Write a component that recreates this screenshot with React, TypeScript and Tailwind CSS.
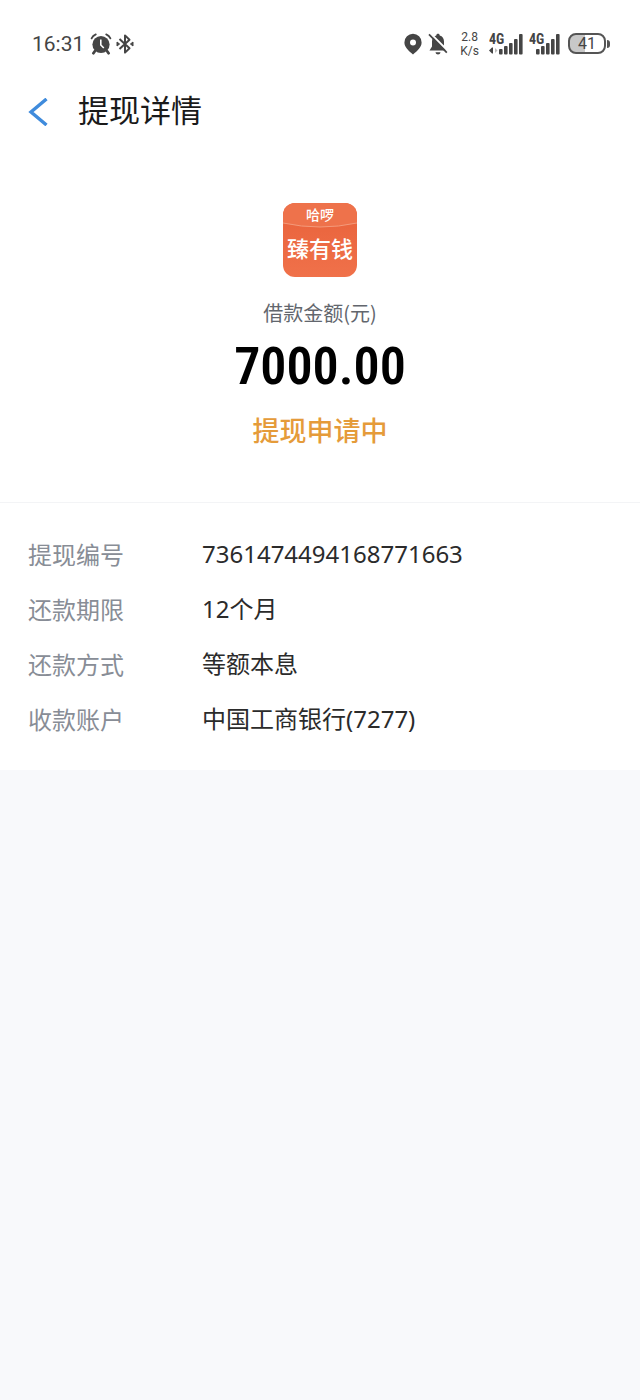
type Row = { label: string; value: string };

const rows: Row[] = [
  { label: "提现编号", value: "7361474494168771663" },
  { label: "还款期限", value: "12个月" },
  { label: "还款方式", value: "等额本息" },
  { label: "收款账户", value: "中国工商银行(7277)" },
];

function AlarmIcon() {
  return (
    <svg width="22" height="22" viewBox="0 0 22 22" fill="none" aria-hidden="true">
      <circle cx="11" cy="11.5" r="8.6" fill="#454545" />
      <path d="M1.6 5.4C2.4 3.6 3.8 2.2 5.8 1.4M20.4 5.4C19.6 3.6 18.2 2.2 16.2 1.4" stroke="#454545" strokeWidth="1.8" strokeLinecap="round" />
      <path d="M5 18L3.4 20.2M17 18L18.6 20.2" stroke="#454545" strokeWidth="2.8" strokeLinecap="round" />
      <path d="M10.8 6.5V12L13.8 15" stroke="#fff" strokeWidth="1.6" />
    </svg>
  );
}

function BluetoothIcon() {
  return (
    <svg width="18" height="22" viewBox="0 0 18 22" fill="none" aria-hidden="true">
      <path d="M3.5 6L13.5 15.3L9 19.6V2.4L13.5 6.7L3.5 16" stroke="#454545" strokeWidth="2" strokeLinejoin="round" />
      <path d="M1 9L3.6 11L1 13ZM17 9L14.4 11L17 13Z" fill="#454545" stroke="#454545" />
    </svg>
  );
}

function PinIcon() {
  return (
    <svg width="18" height="22" viewBox="0 0 18 22" aria-hidden="true">
      <path fillRule="evenodd" fill="#454545" d="M9 .8A8.6 8.6 0 0 0 .4 9.4C.4 14 4.5 17.5 9 21.4C13.5 17.5 17.6 14 17.6 9.4A8.6 8.6 0 0 0 9 .8ZM9 6.6A3 3 0 1 1 9 12.6A3 3 0 0 1 9 6.6Z" />
    </svg>
  );
}

function MutedBellIcon() {
  return (
    <svg width="20" height="22" viewBox="0 0 20 22" fill="none" aria-hidden="true">
      <path d="M10 .8C11 .8 11.7 1.4 11.7 2.5C14.6 3.3 16 5.5 16 8.5V13.5L18.5 17.5H1.5L4 13.5V8.5C4 5.5 5.4 3.3 8.3 2.5C8.3 1.4 9 .8 10 .8Z" fill="#454545" />
      <path d="M7.5 19.3H12.5C12.3 20.8 11.2 21.5 10 21.5S7.7 20.8 7.5 19.3Z" fill="#454545" />
      <path d="M2.4 0.4L20 18" stroke="#fff" strokeWidth="2" />
      <path d="M1 1.4L18.8 19.6" stroke="#454545" strokeWidth="1.7" />
    </svg>
  );
}

// bottom edge is shared, only the tops differ
const barTops = [17, 14, 11, 7, 2];

function SignalIcon({ data }: { data?: boolean }) {
  const start = data ? 10 : 7;
  const width = start + 24;

  return (
    <svg width={width} height="24" viewBox={`0 0 ${width} 24`} role="img" aria-label="4G">
      <text x="0" y="12" fontSize="14" fontWeight="700" fill="#454545" fontFamily="'Roboto Condensed', Roboto, sans-serif">4G</text>
      {data && (
        <>
          <path d="M0 18.5L3 15.5V21.5Z" fill="#454545" />
          <path d="M3.5 15.5V21.5" stroke="#454545" />
          <path d="M6 16L8.5 18.5L6 21Z" fill="#bbb" />
        </>
      )}
      {barTops.map((top, i) => (
        <rect key={top} x={start + i * 5} y={top} width="3.6" height={22.5 - top} rx="1" fill="#454545" />
      ))}
    </svg>
  );
}

function Battery() {
  return (
    <div className="flex items-center gap-px" aria-label="41%">
      <div className="flex h-[21px] w-[38px] items-center justify-center rounded-lg border-2 border-[#555] bg-linear-to-r from-[#c8c8c8] from-45% to-white to-45% font-[Roboto,sans-serif] text-base leading-none text-[#454545]">
        41
      </div>
      <div className="h-2 w-[3px] rounded-r-sm bg-[#555]" />
    </div>
  );
}

function StatusBar() {
  return (
    <div className="flex h-[87px] items-center justify-between pr-[30px] pl-8 text-[#454545]">
      <div className="flex items-center gap-1.5">
        <span className="font-[Roboto,sans-serif] text-[21px] leading-6">16:31</span>
        <div className="flex items-center gap-1">
          <AlarmIcon />
          <BluetoothIcon />
        </div>
      </div>
      <div className="flex items-center">
        <div className="flex items-center gap-1.5">
          <PinIcon />
          <MutedBellIcon />
        </div>
        <div className="ml-3 text-center font-[Roboto,sans-serif] text-xs leading-[14px]">
          <p>2.8</p>
          <p>K/s</p>
        </div>
        <div className="mr-2 ml-2.5 flex items-center gap-1.5">
          <SignalIcon data />
          <SignalIcon />
        </div>
        <Battery />
      </div>
    </div>
  );
}

function AppLogo() {
  return (
    <svg width="74" height="74" viewBox="0 0 74 74" role="img" aria-label="哈啰臻有钱">
      <defs>
        <clipPath id="tile">
          <rect width="74" height="74" rx="12" />
        </clipPath>
        <linearGradient id="body" x1="0" y1="0" x2="0" y2="1">
          <stop offset="0" stopColor="#e8613a" />
          <stop offset="1" stopColor="#f0714a" />
        </linearGradient>
      </defs>
      <g clipPath="url(#tile)">
        <rect width="74" height="74" fill="url(#body)" />
        <path d="M0 0H74V20Q37 28 0 20Z" fill="#ee724b" />
        <path d="M0 20Q37 28 74 20" fill="none" stroke="#f39a7b" />
      </g>
      <g fill="#fff" textAnchor="middle" fontFamily="'Noto Sans CJK SC', sans-serif">
        <text x="37" y="17" fontSize="14" fontWeight="500">哈啰</text>
        <text x="37" y="54" fontSize="22" fontWeight="500">臻有钱</text>
      </g>
    </svg>
  );
}

export default function App() {
  return (
    <div className="min-h-screen bg-[#f8f9fb] font-['Noto_Sans_CJK_SC',sans-serif]">
      <div className="bg-white">
        <StatusBar />

        <header className="flex h-12 items-start gap-7 pl-7">
          <button type="button" aria-label="返回" className="pt-[11px]">
            <svg width="22" height="28" viewBox="0 0 22 28" fill="none">
              <path d="M18.5 1L3 14L18.5 27" stroke="#3f8bdc" strokeWidth="3.4" />
            </svg>
          </button>
          <h1 className="pt-0.5 text-[31px] leading-10 text-[#1a1a1a]">提现详情</h1>
        </header>

        <section className="flex flex-col items-center border-b border-[#f3f4f6] pt-[68px] pb-[47px]">
          <AppLogo />
          <p className="mt-5 text-xl leading-8 text-[#62666d]">借款金额(元)</p>
          <p className="font-['Roboto_Condensed',Roboto,sans-serif] text-[52px] leading-[76px] font-semibold text-black">
            7000.00
          </p>
          <p className="text-[27px] leading-[50px] font-medium text-[#e59b3a]">提现申请中</p>
        </section>

        <dl className="pt-[23px] pb-6">
          {rows.map((row) => (
            <div key={row.label} className="flex pl-7 text-2xl leading-[55px]">
              <dt className="w-[174px] shrink-0 text-[#888d96]">{row.label}</dt>
              <dd className="font-['Noto_Sans','Noto_Sans_CJK_SC',sans-serif] text-[#2b2b2b]">{row.value}</dd>
            </div>
          ))}
        </dl>
      </div>
    </div>
  );
}
